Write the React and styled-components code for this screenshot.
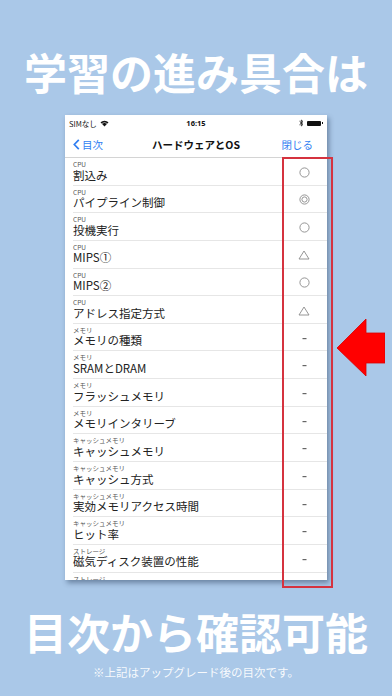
import React from 'react';
import styled, { createGlobalStyle } from 'styled-components';

const GlobalStyle = createGlobalStyle`
  html, body {
    margin: 0;
    padding: 0;
    background: #aac8e8;
  }
`;

const items = [
  { cat: 'CPU', title: '割込み', mark: 'circle' },
  { cat: 'CPU', title: 'パイプライン制御', mark: 'double' },
  { cat: 'CPU', title: '投機実行', mark: 'circle' },
  { cat: 'CPU', title: 'MIPS①', mark: 'triangle' },
  { cat: 'CPU', title: 'MIPS②', mark: 'circle' },
  { cat: 'CPU', title: 'アドレス指定方式', mark: 'triangle' },
  { cat: 'メモリ', title: 'メモリの種類', mark: 'dash' },
  { cat: 'メモリ', title: 'SRAMとDRAM', mark: 'dash' },
  { cat: 'メモリ', title: 'フラッシュメモリ', mark: 'dash' },
  { cat: 'メモリ', title: 'メモリインタリーブ', mark: 'dash' },
  { cat: 'キャッシュメモリ', title: 'キャッシュメモリ', mark: 'dash' },
  { cat: 'キャッシュメモリ', title: 'キャッシュ方式', mark: 'dash' },
  { cat: 'キャッシュメモリ', title: '実効メモリアクセス時間', mark: 'dash' },
  { cat: 'キャッシュメモリ', title: 'ヒット率', mark: 'dash' },
  { cat: 'ストレージ', title: '磁気ディスク装置の性能', mark: 'dash' },
  { cat: 'ストレージ', title: '磁気ディスクの容量', mark: 'dash' },
];

const Page = styled.div`
  width: 392px;
  height: 696px;
  background: #aac8e8;
  display: flex;
  flex-direction: column;
  align-items: center;
  overflow: hidden;
  font-family: "Noto Sans CJK JP", "Noto Sans", sans-serif;
`;

const Headline = styled.h1`
  margin: ${p => p.top}px 0 0;
  font-size: 43px;
  line-height: 43px;
  font-weight: 700;
  color: #fff;
  white-space: nowrap;
`;

const Note = styled.p`
  margin: 12px 0 0;
  font-size: 11.5px;
  line-height: 14px;
  color: rgba(255, 255, 255, 0.92);
`;

const Stage = styled.div`
  position: relative;
  width: 392px;
  margin-top: 22px;
  padding-left: 65px;
  box-sizing: border-box;
  display: flex;
`;

const Phone = styled.div`
  width: 262px;
  height: 465px;
  background: #fff;
  box-shadow: 2px 3px 5px rgba(30, 50, 80, 0.45);
  overflow: hidden;
  display: flex;
  flex-direction: column;
`;

const StatusBar = styled.div`
  height: 16px;
  padding: 0 4px;
  display: grid;
  grid-template-columns: 1fr auto 1fr;
  align-items: center;
  font-size: 7.5px;
  color: #111;
  flex-shrink: 0;
`;

const StatusLeft = styled.div`
  display: flex;
  align-items: center;
  gap: 3px;
`;

const StatusRight = styled.div`
  display: flex;
  justify-content: flex-end;
  align-items: center;
  gap: 3px;
`;

const Clock = styled.div`
  font-weight: 700;
  font-family: "Noto Sans", sans-serif;
`;

const Battery = styled.div`
  width: 14px;
  height: 5px;
  background: #111;
  border-radius: 1px;
  position: relative;
  margin-right: 2px;
  &::after {
    content: '';
    position: absolute;
    right: -2px;
    top: 1.5px;
    width: 1px;
    height: 2px;
    background: #111;
  }
`;

const NavBar = styled.div`
  height: 26px;
  display: grid;
  grid-template-columns: 1fr auto 1fr;
  align-items: center;
  border-bottom: 1px solid #d4d4d4;
  font-size: 10.5px;
  flex-shrink: 0;
`;

const NavBack = styled.div`
  display: flex;
  align-items: center;
  gap: 2px;
  padding-left: 8px;
  color: #2f7ef2;
`;

const NavTitle = styled.div`
  font-weight: 700;
  color: #111;
`;

const NavClose = styled.div`
  text-align: right;
  padding-right: 14px;
  color: #2f7ef2;
`;

const Row = styled.div`
  height: 27.65px;
  padding-left: 8px;
  display: flex;
  flex-shrink: 0;
`;

const RowInner = styled.div`
  flex: 1;
  display: flex;
  border-bottom: 1px solid #e6e6e6;
`;

const TextCol = styled.div`
  flex: 1;
  display: flex;
  flex-direction: column;
  padding-top: 2px;
`;

const Category = styled.div`
  font-size: 6.5px;
  line-height: 8px;
  color: #555;
`;

const Title = styled.div`
  font-size: 11.5px;
  line-height: 13px;
  margin-top: 0.5px;
  color: #222;
`;

const MarkCell = styled.div`
  width: 46px;
  display: flex;
  align-items: center;
  justify-content: center;
  padding-top: 2px;
`;

const Highlight = styled.div`
  position: absolute;
  left: 282px;
  top: 42px;
  width: 51px;
  height: 431px;
  box-sizing: border-box;
  border: 2px solid #d5333f;
`;

const Arrow = styled.svg`
  position: absolute;
  left: 337px;
  top: 204px;
`;

function Mark({ type }) {
  const stroke = '#8a8a8a';
  if (type === 'circle') {
    return (
      <svg width="11" height="11" viewBox="0 0 11 11">
        <circle cx="5.5" cy="5.5" r="4.6" fill="none" stroke={stroke} strokeWidth="0.9" />
      </svg>
    );
  }
  if (type === 'double') {
    return (
      <svg width="11" height="11" viewBox="0 0 11 11">
        <circle cx="5.5" cy="5.5" r="4.6" fill="none" stroke={stroke} strokeWidth="0.9" />
        <circle cx="5.5" cy="5.5" r="2.6" fill="none" stroke={stroke} strokeWidth="0.9" />
      </svg>
    );
  }
  if (type === 'triangle') {
    return (
      <svg width="12" height="10" viewBox="0 0 12 10">
        <path d="M6 1 L11 9 L1 9 Z" fill="none" stroke={stroke} strokeWidth="0.9" strokeLinejoin="round" />
      </svg>
    );
  }
  return (
    <svg width="5" height="3" viewBox="0 0 5 3">
      <rect x="0.5" y="1" width="4" height="1.2" fill="#666" />
    </svg>
  );
}

export default function App() {
  return (
    <>
      <GlobalStyle />
      <Page>
        <Headline top={50}>学習の進み具合は</Headline>
        <Stage>
          <Phone>
            <StatusBar>
              <StatusLeft>
                <span>SIMなし</span>
                <svg width="9" height="7" viewBox="0 0 9 7">
                  <path d="M0.5 2.3 A6 6 0 0 1 8.5 2.3 L4.5 6.5 Z" fill="#111" />
                  <path d="M1.8 3.6 A4.2 4.2 0 0 1 7.2 3.6" fill="none" stroke="#fff" strokeWidth="0.6" />
                </svg>
              </StatusLeft>
              <Clock>16:15</Clock>
              <StatusRight>
                <svg width="5" height="8" viewBox="0 0 5 8">
                  <path d="M0.5 2.2 L4 5.4 L2.3 7 L2.3 1 L4 2.6 L0.5 5.8" fill="none" stroke="#111" strokeWidth="0.8" />
                </svg>
                <Battery />
              </StatusRight>
            </StatusBar>
            <NavBar>
              <NavBack>
                <svg width="7" height="11" viewBox="0 0 7 11">
                  <path d="M5.8 0.8 L1.3 5.5 L5.8 10.2" fill="none" stroke="#2f7ef2" strokeWidth="1.7" />
                </svg>
                <span>目次</span>
              </NavBack>
              <NavTitle>ハードウェアとOS</NavTitle>
              <NavClose>閉じる</NavClose>
            </NavBar>
            {items.map((it, i) => (
              <Row key={i}>
                <RowInner>
                  <TextCol>
                    <Category>{it.cat}</Category>
                    <Title>{it.title}</Title>
                  </TextCol>
                  <MarkCell>
                    <Mark type={it.mark} />
                  </MarkCell>
                </RowInner>
              </Row>
            ))}
          </Phone>
          <Highlight />
          <Arrow width="48" height="57" viewBox="0 0 48 57">
            <path d="M0 29 L29 0 L29 14 L48 14 L48 44 L29 44 L29 57 Z" fill="#ff0000" stroke="#d80000" strokeWidth="0.8" />
          </Arrow>
        </Stage>
        <Headline top={30}>目次から確認可能</Headline>
        <Note>※上記はアップグレード後の目次です。</Note>
      </Page>
    </>
  );
}
